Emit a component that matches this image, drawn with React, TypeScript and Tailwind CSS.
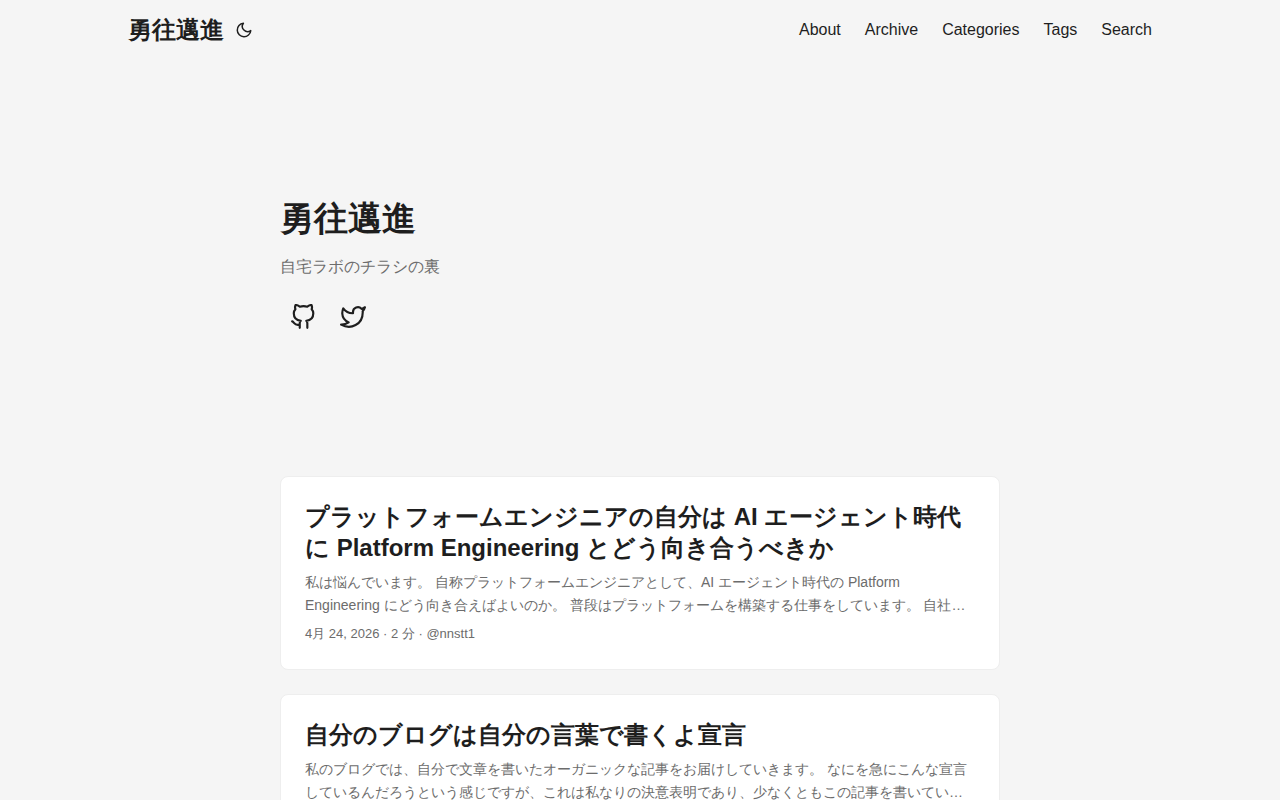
const SITE_TITLE = "勇往邁進";

const navItems = ["About", "Archive", "Categories", "Tags", "Search"];

const posts = [
  {
    title: "プラットフォームエンジニアの自分は AI エージェント時代に Platform Engineering とどう向き合うべきか",
    summary:
      "私は悩んでいます。 自称プラットフォームエンジニアとして、AI エージェント時代の Platform Engineering にどう向き合えばよいのか。 普段はプラットフォームを構築する仕事をしています。 自社…",
    meta: "4月 24, 2026 · 2 分 · @nnstt1",
  },
  {
    title: "自分のブログは自分の言葉で書くよ宣言",
    summary:
      "私のブログでは、自分で文章を書いたオーガニックな記事をお届けしていきます。 なにを急にこんな宣言しているんだろうという感じですが、これは私なりの決意表明であり、少なくともこの記事を書いてい…",
    meta: "",
  },
];

function MoonIcon() {
  return (
    <svg viewBox="0 0 24 24" className="h-[18px] w-[18px]" fill="none" stroke="currentColor" strokeWidth="2" strokeLinecap="round" strokeLinejoin="round" aria-hidden="true">
      <path d="M21 12.79A9 9 0 1 1 11.21 3 7 7 0 0 0 21 12.79z" />
    </svg>
  );
}

function GithubIcon() {
  return (
    <svg viewBox="0 0 24 24" className="h-[26px] w-[26px]" fill="none" stroke="currentColor" strokeWidth="2" strokeLinecap="round" strokeLinejoin="round" aria-hidden="true">
      <path d="M9 19c-5 1.5-5-2.5-7-3m14 6v-3.87a3.37 3.37 0 0 0-.94-2.61c3.14-.35 6.44-1.54 6.44-7A5.44 5.44 0 0 0 20 4.77 5.07 5.07 0 0 0 19.91 1S18.73.65 16 2.48a13.38 13.38 0 0 0-7 0C6.27.65 5.09 1 5.09 1A5.07 5.07 0 0 0 5 4.77a5.44 5.44 0 0 0-1.5 3.78c0 5.42 3.3 6.61 6.44 7A3.37 3.37 0 0 0 9 18.13V22" />
    </svg>
  );
}

function TwitterIcon() {
  return (
    <svg viewBox="0 0 24 24" className="h-[26px] w-[26px]" fill="none" stroke="currentColor" strokeWidth="2" strokeLinecap="round" strokeLinejoin="round" aria-hidden="true">
      <path d="M23 3a10.9 10.9 0 0 1-3.14 1.53 4.48 4.48 0 0 0-7.86 3v1A10.66 10.66 0 0 1 3 4s-4 9 5 13a11.64 11.64 0 0 1-7 2c9 5 20 0 20-11.5a4.5 4.5 0 0 0-.08-.83A7.72 7.72 0 0 0 23 3z" />
    </svg>
  );
}

function Header() {
  return (
    <header className="mx-auto flex max-w-[1072px] justify-between px-6 leading-[60px]">
      <div className="flex items-center">
        <a href="#" className="text-2xl leading-[60px] font-bold">{SITE_TITLE}</a>
        <button type="button" aria-label="Toggle theme" className="ml-[11px] flex items-center">
          <MoonIcon />
        </button>
      </div>
      <nav>
        <ul className="flex gap-6">
          {navItems.map((item) => (
            <li key={item}>
              <a href="#">{item}</a>
            </li>
          ))}
        </ul>
      </nav>
    </header>
  );
}

export default function App() {
  return (
    <div className="h-screen overflow-hidden bg-[#f5f5f5] font-['Liberation_Sans',sans-serif] text-base text-[#1e1e1e]">
      <Header />
      <main className="mx-auto max-w-[768px] p-6">
        <section className="mb-6 flex min-h-[368px] flex-col justify-center gap-3">
          <h1 className="text-[34px] leading-[48px] font-bold">{SITE_TITLE}</h1>
          <p className="leading-[26px] text-[#6c6c6c]">自宅ラボのチラシの裏</p>
          <div className="flex gap-6 px-2.5 py-3">
            <a href="#" aria-label="GitHub"><GithubIcon /></a>
            <a href="#" aria-label="Twitter"><TwitterIcon /></a>
          </div>
        </section>
        {posts.map((post) => (
          <article key={post.title} className="mb-6 rounded-lg border border-[#eeeeee] bg-white p-6">
            <h2 className="text-2xl leading-[31px] font-bold">
              <a href="#">{post.title}</a>
            </h2>
            <p className="mt-2 mb-1.5 text-sm leading-[23px] text-[#6c6c6c]">{post.summary}</p>
            {post.meta && <footer className="text-[13px] leading-[22px] text-[#6c6c6c]">{post.meta}</footer>}
          </article>
        ))}
      </main>
    </div>
  );
}
